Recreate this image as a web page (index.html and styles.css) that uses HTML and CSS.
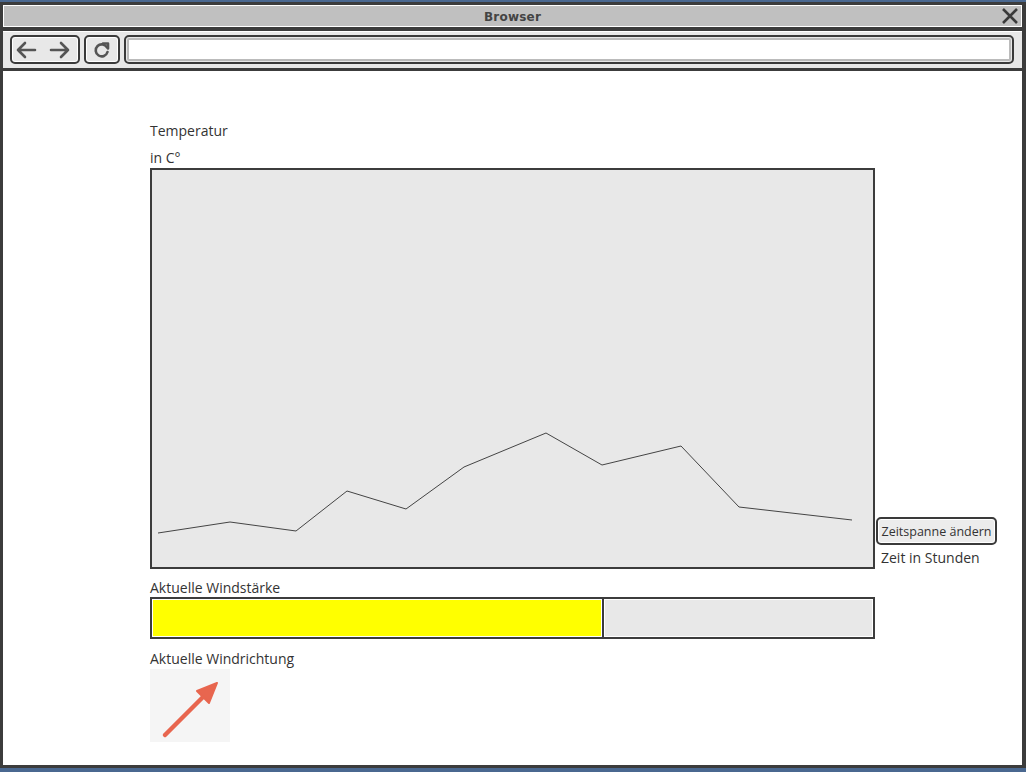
FILE: index.html
```html
<!DOCTYPE html>
<html lang="de">
<head>
<meta charset="utf-8">
<title>Browser</title>
<link rel="stylesheet" href="styles.css">
</head>
<body>
<div class="frame">
  <div class="titlebar">
    <div class="titlebar-inner">
      <span class="title">Browser</span>
      <svg class="close" width="18" height="18" viewBox="0 0 18 18"><path d="M2 2 L16 16 M16 2 L2 16" stroke="#3a3a3a" stroke-width="2.6" fill="none"/></svg>
    </div>
  </div>
  <div class="band band-top"></div>
  <div class="toolbar">
    <div class="tbtn nav">
      <svg width="60" height="20" viewBox="0 0 60 20"><path d="M3 10 H20 M10 3 L3 10 L10 17" stroke="#555" stroke-width="2.6" fill="none" stroke-linecap="round" stroke-linejoin="round"/><path d="M36 10 H53 M46 3 L53 10 L46 17" stroke="#555" stroke-width="2.6" fill="none" stroke-linecap="round" stroke-linejoin="round"/></svg>
    </div>
    <div class="tbtn reload">
      <svg width="20" height="20" viewBox="0 0 20 20"><path d="M15 7.5 A6 6 0 1 0 15.5 12" stroke="#555" stroke-width="2.6" fill="none" stroke-linecap="round"/><path d="M11 3.5 L16 3.5 L16 8.5" stroke="#555" stroke-width="2.6" fill="none" stroke-linecap="round" stroke-linejoin="round"/></svg>
    </div>
    <div class="address"><div class="address-inner"></div></div>
  </div>
  <div class="band band-bottom"></div>
  <div class="content">
    <div class="label label-first">Temperatur</div>
    <div class="label">in C°</div>
    <div class="chart-row">
      <div class="chart">
        <svg class="chart-svg" viewBox="0 0 721 397" preserveAspectRatio="none">
          <polyline points="6,363 78,352 144,361 195,321 254,339 312,297 394,263 450,295 529,276 587,337 700,350" fill="none" stroke="#444" stroke-width="1"/>
        </svg>
      </div>
      <div class="chart-side">
        <button class="btn">Zeitspanne ändern</button>
        <div class="label side-label">Zeit in Stunden</div>
      </div>
    </div>
    <div class="label label-wind">Aktuelle Windstärke</div>
    <div class="meter">
      <div class="meter-fill" style="width: 62.4%"></div>
      <div class="meter-rest"></div>
    </div>
    <div class="label label-dir">Aktuelle Windrichtung</div>
    <div class="compass">
      <svg width="80" height="73" viewBox="0 0 80 73"><path d="M15 66 L56 25" stroke="#e8664f" stroke-width="4.5" stroke-linecap="round" fill="none"/><path d="M67 14 L47 22 L59 34 Z" fill="#e8664f" stroke="#e8664f" stroke-width="2" stroke-linejoin="round"/></svg>
    </div>
  </div>
</div>
</body>
</html>
```
FILE: styles.css
```css
html, body {
  margin: 0;
  padding: 0;
}
body {
  background: #4a6890;
  width: 1026px;
  height: 772px;
  overflow: hidden;
  font-family: "Open Sans", "DejaVu Sans", sans-serif;
  color: #333;
}
.frame {
  margin-top: 2px;
  height: 766px;
  box-sizing: border-box;
  border: 3px solid #3c3c3c;
  border-right-width: 4px;
  background: #fff;
  display: flex;
  flex-direction: column;
}
.titlebar {
  padding: 1px;
  background: #fff;
}
.titlebar-inner {
  height: 20px;
  background: #c0c0c0;
  position: relative;
  display: flex;
  align-items: center;
  justify-content: center;
}
.title {
  font-family: "DejaVu Sans", sans-serif;
  font-weight: bold;
  font-size: 12px;
  color: #444;
  letter-spacing: 0.2px;
  padding-top: 1px;
}
.close {
  position: absolute;
  right: 2px;
  top: 1px;
}
.band {
  background: #3c3c3c;
}
.band-top { height: 4px; }
.band-bottom { height: 3px; }
.toolbar {
  height: 37px;
  border-top: 1px solid #fff;
  background: #e8e8e8;
  display: flex;
  align-items: flex-start;
  gap: 4px;
  padding: 3px 8px 0 7px;
  box-sizing: border-box;
}
.tbtn {
  height: 29px;
  box-sizing: border-box;
  border: 2px solid #3a3a3a;
  border-radius: 5px;
  box-shadow: inset 0 0 0 1px #fff;
  background: #e8e8e8;
  display: flex;
  align-items: center;
  justify-content: center;
}
.nav { width: 70px; }
.reload { width: 36px; }
.address {
  flex: 1;
  height: 29px;
  box-sizing: border-box;
  border: 2px solid #3a3a3a;
  border-radius: 5px;
  padding: 1px;
  background: #e8e8e8;
}
.address-inner {
  height: 100%;
  box-sizing: border-box;
  border: 2px solid #bbb;
  border-radius: 2px;
  background: #fff;
}
.content {
  flex: 1;
  padding-left: 147px;
}
.label {
  font-size: 14px;
  line-height: 18px;
  height: 18px;
  color: #333;
  white-space: nowrap;
}
.label-first { margin-top: 51px; margin-bottom: 9px; }
.chart-row {
  display: flex;
  align-items: flex-end;
  margin-top: 1px;
}
.chart {
  width: 725px;
  height: 401px;
  box-sizing: border-box;
  border: 2px solid #3c3c3c;
  background: #e8e8e8;
}
.chart-svg {
  display: block;
  width: 721px;
  height: 397px;
}
.chart-side {
  display: flex;
  flex-direction: column;
  margin-left: 1px;
}
.btn {
  width: 121px;
  height: 28px;
  box-sizing: border-box;
  border: 2px solid #3a3a3a;
  border-radius: 5px;
  box-shadow: inset 0 0 0 1px #fff;
  background: #ececec;
  font-family: "Open Sans", "DejaVu Sans", sans-serif;
  font-size: 12.5px;
  color: #333;
  padding: 0;
  margin: 0 0 4px 0;
}
.side-label {
  margin-left: 5px;
  margin-bottom: 2px;
}
.label-wind { margin-top: 10px; }
.meter {
  width: 725px;
  height: 42px;
  box-sizing: border-box;
  border: 2px solid #3c3c3c;
  background: #e8e8e8;
  display: flex;
}
.meter-fill {
  background: #ffff00;
  border: 1px solid #fff;
  box-sizing: border-box;
  height: 100%;
  box-shadow: 2px 0 0 #3c3c3c;
}
.meter-rest {
  flex: 1;
  margin-left: 2px;
  border: 1px solid #fff;
  box-sizing: border-box;
}
.label-dir { margin-top: 11px; }
.compass {
  width: 80px;
  height: 73px;
  margin-top: 1px;
  background: #f5f5f5;
}
.compass svg { display: block; }
```
